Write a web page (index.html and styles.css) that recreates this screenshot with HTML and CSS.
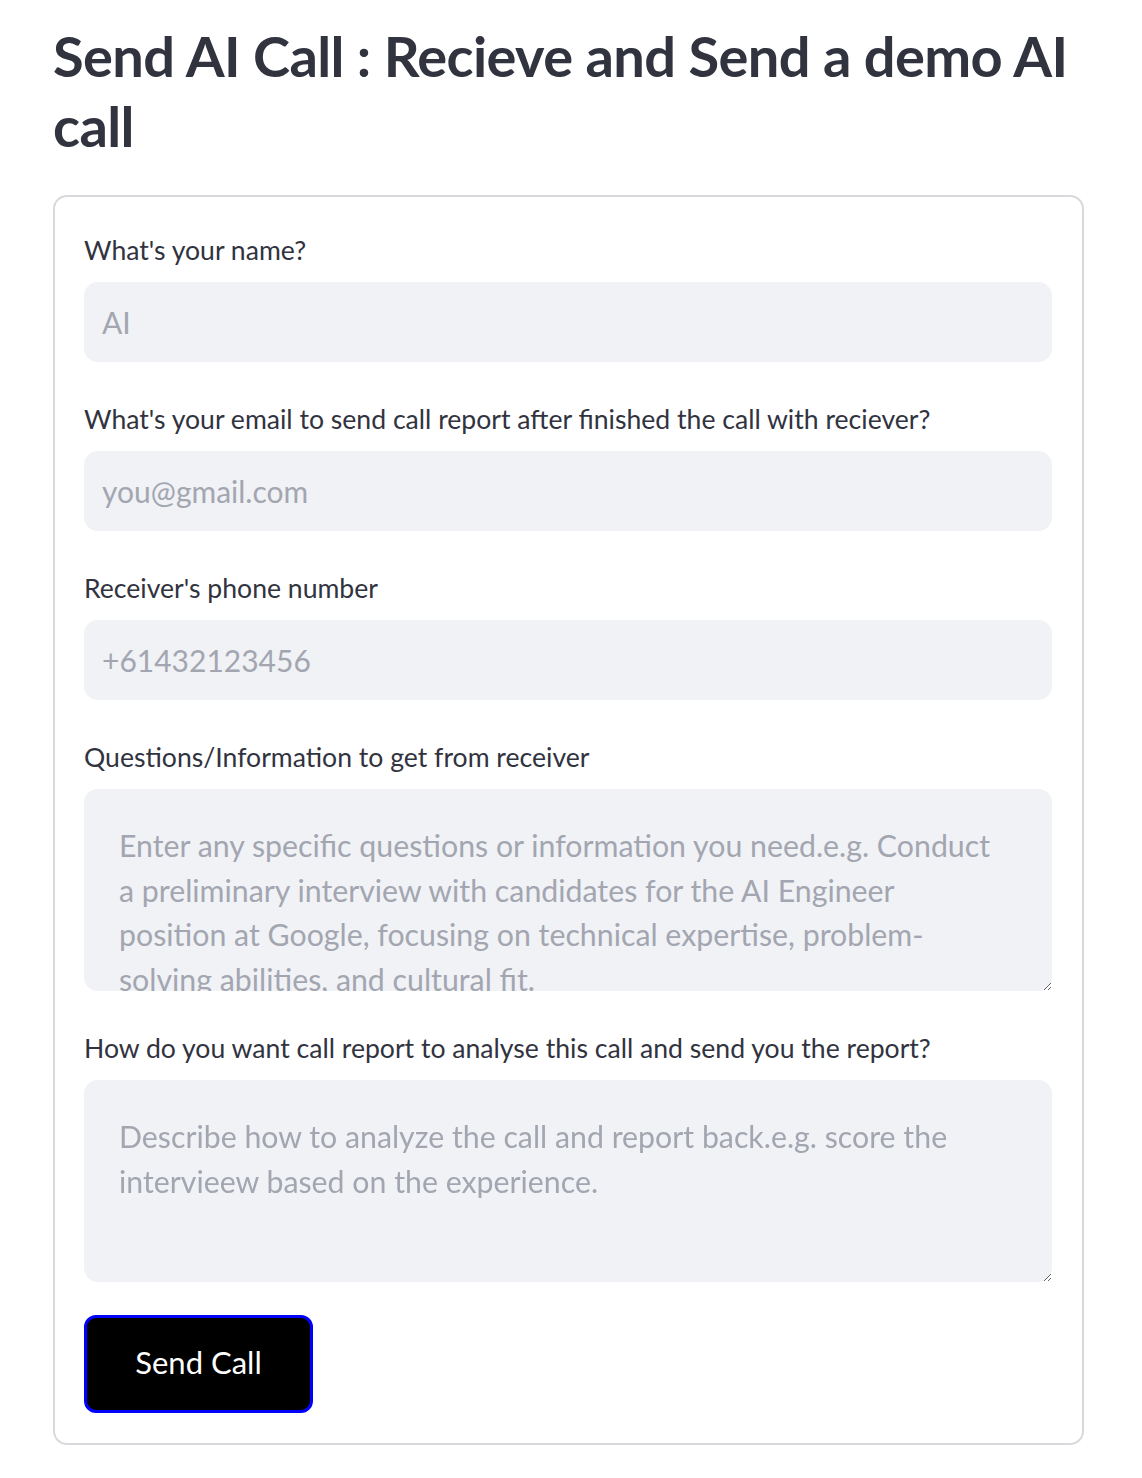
FILE: index.html
```html
<!DOCTYPE html>
<html lang="en">
<head>
<meta charset="utf-8">
<title>Send AI Call</title>
<link rel="stylesheet" href="styles.css">
</head>
<body>
<main class="page">
  <h1 class="title">Send AI Call : Recieve and Send a demo AI call</h1>
  <form class="card">
    <div class="field">
      <label class="label" for="name">What's your name?</label>
      <input class="input" id="name" type="text" placeholder="AI">
    </div>
    <div class="field">
      <label class="label" for="email">What's your email to send call report after finished the call with reciever?</label>
      <input class="input" id="email" type="text" placeholder="you@gmail.com">
    </div>
    <div class="field">
      <label class="label" for="phone">Receiver's phone number</label>
      <input class="input" id="phone" type="text" placeholder="+61432123456">
    </div>
    <div class="field">
      <label class="label" for="questions">Questions/Information to get from receiver</label>
      <textarea class="area area-scroll" id="questions" placeholder="Enter any specific questions or information you need.e.g. Conduct a preliminary interview with candidates for the AI Engineer position at Google, focusing on technical expertise, problem-solving abilities, and cultural fit."></textarea>
    </div>
    <div class="field field-last">
      <label class="label" for="report">How do you want call report to analyse this call and send you the report?</label>
      <textarea class="area" id="report" placeholder="Describe how to analyze the call and report back.e.g. score the intervieew based on the experience."></textarea>
    </div>
    <button class="btn" type="button">Send Call</button>
  </form>
</main>
</body>
</html>
```

FILE: styles.css
```css
* { box-sizing: border-box; }
html, body { margin: 0; padding: 0; background: #ffffff; }
body {
  font-family: "Lato", "Open Sans", sans-serif;
  color: #31333f;
}
.page {
  padding: 21px 58px 0 53px;
  width: 1142px;
}
.title {
  margin: 0 0 34px 0;
  font-size: 56px;
  line-height: 70px;
  font-weight: 700;
  color: #31333f;
  letter-spacing: -0.6px;
}
.card {
  width: 1031px;
  border: 2px solid #d8d9dc;
  border-radius: 14px;
  padding: 37px 29px 30px 29px;
  display: flex;
  flex-direction: column;
}
.field {
  display: flex;
  flex-direction: column;
  margin-bottom: 41px;
}
.field-last { margin-bottom: 33px; }
.label {
  font-size: 26.6px;
  line-height: 32px;
  margin-bottom: 16px;
  color: #31333f;
  display: block;
  white-space: nowrap;
}
.input {
  height: 80px;
  width: 968px;
  border: none;
  border-radius: 14px;
  background: #f0f2f6;
  padding: 0 18px;
  font-family: inherit;
  font-size: 30px;
  color: #31333f;
  outline: none;
}
.input::placeholder { color: #a3a6b0; }
.area {
  width: 968px;
  height: 202px;
  border: none;
  border-radius: 14px;
  background: #f0f2f6;
  padding: 34px 50px 0 35px;
  font-family: inherit;
  font-size: 30.3px;
  line-height: 44.5px;
  color: #31333f;
  outline: none;
  resize: vertical;
}
.area::placeholder { color: #a3a6b0; }
.btn {
  width: 229px;
  height: 98px;
  padding: 0 0 4px 0;
  background: #000000;
  color: #ffffff;
  border: 3px solid #0000ff;
  border-radius: 12px;
  font-family: inherit;
  font-size: 31px;
  cursor: pointer;
}
```
